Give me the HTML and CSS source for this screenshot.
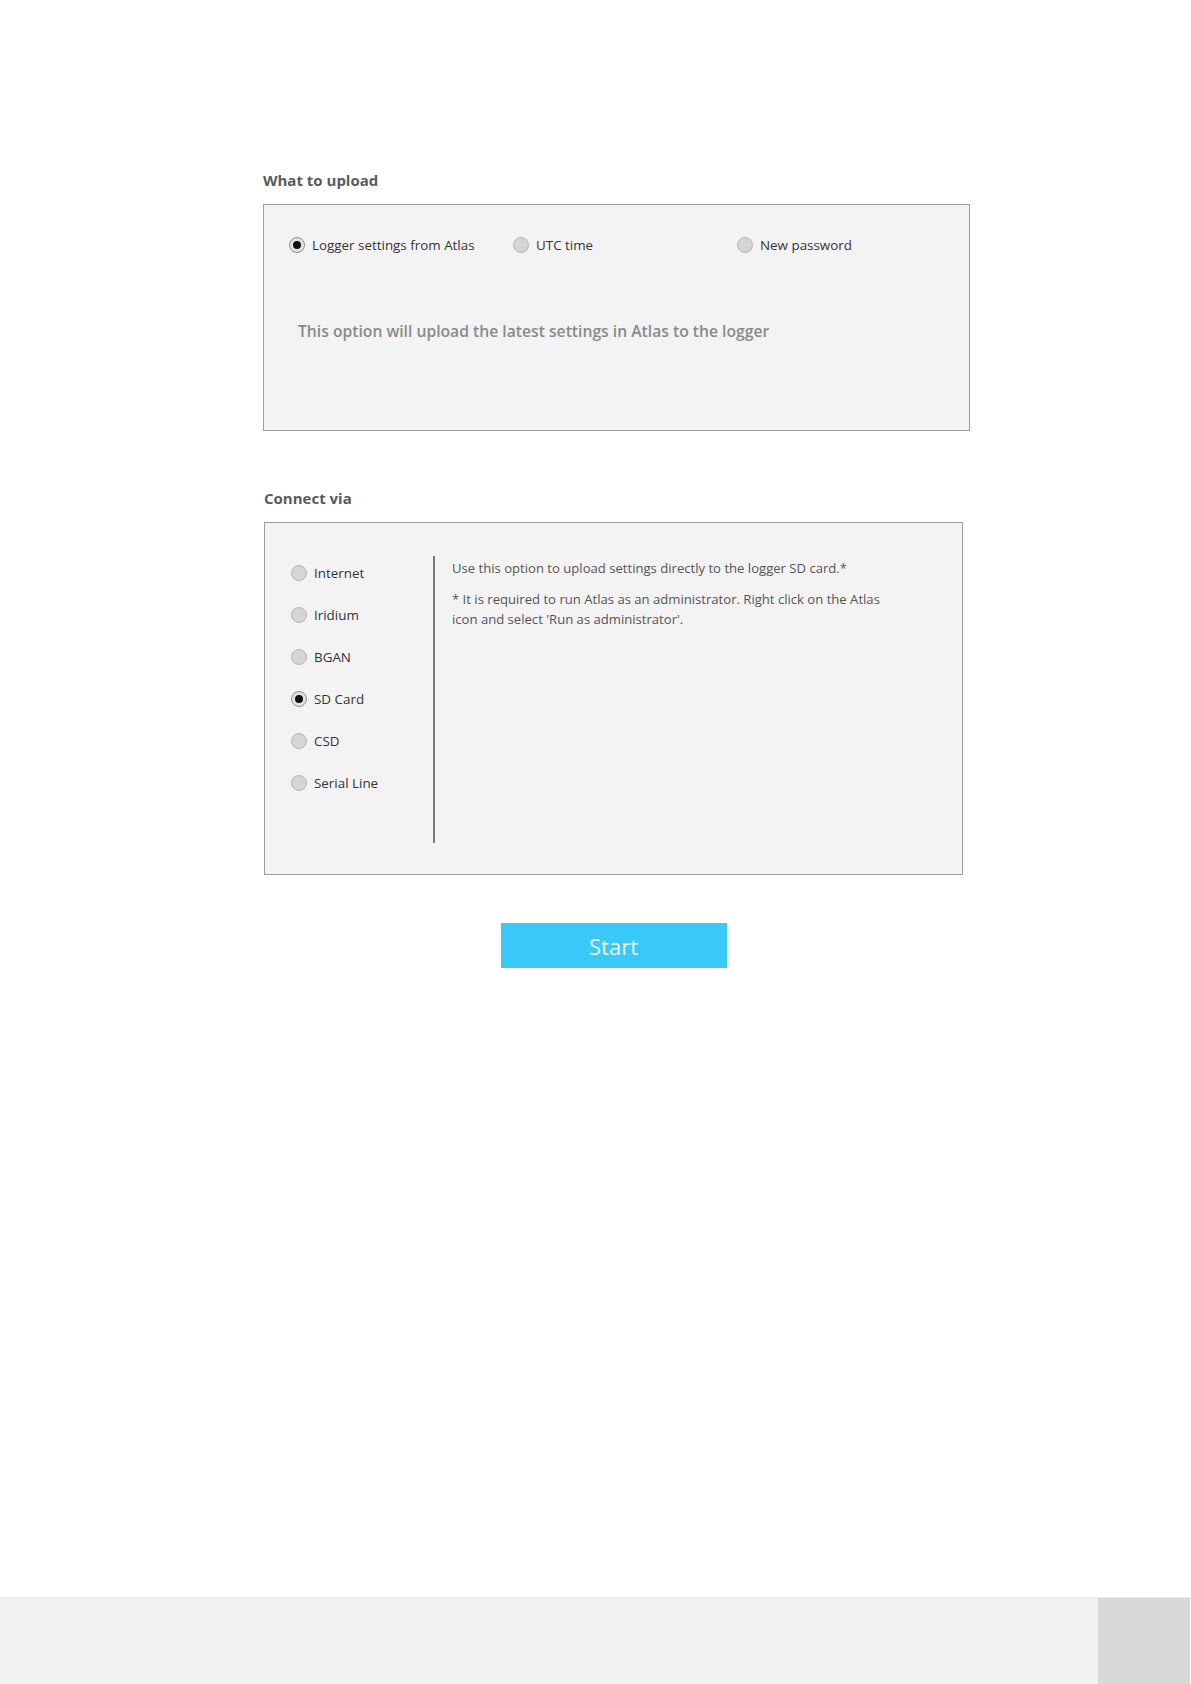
FILE: index.html
```html
<!DOCTYPE html>
<html lang="en">
<head>
<meta charset="utf-8">
<title>Upload</title>
<link rel="stylesheet" href="styles.css">
</head>
<body>
<main class="page">
  <section class="section">
    <h2 class="section-title">What to upload</h2>
    <div class="box box-upload">
      <div class="option-row">
        <label class="option"><span class="radio checked"></span><span class="label">Logger settings from Atlas</span></label>
        <label class="option"><span class="radio"></span><span class="label">UTC time</span></label>
        <label class="option"><span class="radio"></span><span class="label">New password</span></label>
      </div>
      <p class="upload-desc">This option will upload the latest settings in Atlas to the logger</p>
    </div>
  </section>

  <section class="section section-connect">
    <h2 class="section-title">Connect via</h2>
    <div class="box box-connect">
      <div class="connect-list">
        <label class="option conn"><span class="radio"></span><span class="label">Internet</span></label>
        <label class="option conn"><span class="radio"></span><span class="label">Iridium</span></label>
        <label class="option conn"><span class="radio"></span><span class="label">BGAN</span></label>
        <label class="option conn"><span class="radio checked"></span><span class="label">SD Card</span></label>
        <label class="option conn"><span class="radio"></span><span class="label">CSD</span></label>
        <label class="option conn"><span class="radio"></span><span class="label">Serial Line</span></label>
      </div>
      <div class="divider"></div>
      <div class="connect-info">
        <p>Use this option to upload settings directly to the logger SD card.*</p>
        <p>* It is required to run Atlas as an administrator. Right click on the Atlas icon and select 'Run as administrator'.</p>
      </div>
    </div>
    <div class="actions">
      <button class="start-btn" type="button">Start</button>
    </div>
  </section>
</main>
<footer class="footer">
  <div class="footer-fill"></div>
  <div class="footer-tab"></div>
</footer>
</body>
</html>
```

FILE: styles.css
```css
* { box-sizing: border-box; }

html, body {
  margin: 0;
  padding: 0;
  background: #ffffff;
}

body {
  min-height: 1684px;
  display: flex;
  flex-direction: column;
  font-family: "Open Sans", "Noto Sans", sans-serif;
  color: #333333;
}

.page {
  padding: 170px 0 0 263px;
  width: 970px;
}

.section-title {
  margin: 0 0 14px 0;
  font-size: 15px;
  line-height: 20px;
  font-weight: 700;
  color: #5a5a5a;
}

.box {
  background: #f3f3f3;
  border: 1px solid #9c9c9c;
}

.box-upload {
  width: 707px;
  height: 227px;
  padding: 30px 0 0 25px;
}

.option-row {
  display: flex;
}

.option {
  display: flex;
  align-items: center;
  height: 20px;
  font-size: 13.4px;
  color: #333333;
}

.option-row .option {
  width: 224px;
}

.radio {
  width: 16px;
  height: 16px;
  border-radius: 50%;
  background: #d5d5d5;
  border: 1px solid #b5b5b5;
  margin-right: 7px;
  flex: none;
  display: flex;
  align-items: center;
  justify-content: center;
}

.radio.checked {
  background: #e2e2e2;
  border-color: #8f8f8f;
}

.radio.checked::after {
  content: "";
  width: 8px;
  height: 8px;
  border-radius: 50%;
  background: #111111;
}

.label {
  white-space: nowrap;
}

.upload-desc {
  margin: 65px 0 0 9px;
  font-size: 15.7px;
  line-height: 22px;
  font-weight: 600;
  color: #8a8a8a;
}

.section-connect {
  margin-top: 57px;
  padding-left: 1px;
}

.box-connect {
  width: 699px;
  height: 353px;
  padding: 29px 0 31px 26px;
  display: flex;
}

.connect-list {
  width: 142px;
  display: flex;
  flex-direction: column;
}

.option.conn {
  height: 42px;
}

.divider {
  width: 2px;
  margin-top: 4px;
  background: #7a7a7a;
}

.connect-info {
  padding-left: 17px;
  padding-top: 6px;
  width: 452px;
  font-size: 13.1px;
  line-height: 20px;
  color: #555555;
}

.connect-info p {
  margin: 0 0 11px 0;
}

.actions {
  width: 699px;
  display: flex;
  justify-content: center;
  margin-top: 48px;
}

.start-btn {
  width: 226px;
  height: 45px;
  border: none;
  background: #38c9f8;
  color: #eef9ff;
  font-family: "Open Sans", "Noto Sans", sans-serif;
  font-size: 22px;
  padding: 0;
}

.footer {
  margin-top: auto;
  height: 87px;
  display: flex;
  border-top: 1px solid #ebebeb;
}

.footer-fill {
  flex: 1;
  background: #f1f1f1;
}

.footer-tab {
  width: 92px;
  margin-right: 1px;
  background: #d8d8d8;
}
```
